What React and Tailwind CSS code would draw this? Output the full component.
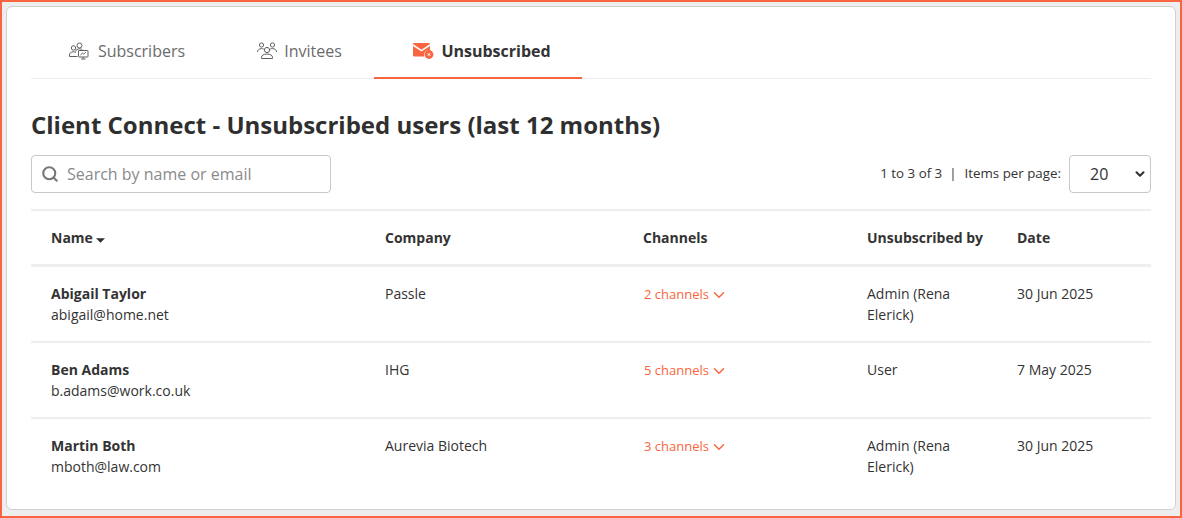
import React from 'react';
import { ChevronDown, Search } from 'lucide-react';

const rows = [
  { name: 'Abigail Taylor', email: 'abigail@home.net', company: 'Passle', channels: '2 channels', by: 'Admin (Rena Elerick)', date: '30 Jun 2025' },
  { name: 'Ben Adams', email: 'b.adams@work.co.uk', company: 'IHG', channels: '5 channels', by: 'User', date: '7 May 2025' },
  { name: 'Martin Both', email: 'mboth@law.com', company: 'Aurevia Biotech', channels: '3 channels', by: 'Admin (Rena Elerick)', date: '30 Jun 2025' },
];

const cols = 'grid grid-cols-[334px_258px_224px_150px_1fr] pl-5';

function SubscribersIcon() {
  return (
    <svg width="20" height="18" viewBox="0 0 20 18" fill="none" stroke="#5f5f5f" strokeWidth="1">
      <circle cx="4.5" cy="6" r="2.2" />
      <path d="M0.5 14.5v-1.5c0-2 1.6-3.2 4-3.2 1 0 1.8.2 2.4.6" />
      <path d="M0.5 14.5h8" />
      <circle cx="10.5" cy="3.5" r="2.5" />
      <path d="M6.5 9.5c.5-1.7 2-2.7 4-2.7 1.4 0 2.5.5 3.2 1.5" />
      <rect x="9.5" y="8.5" width="9.5" height="6.5" rx="0.6" />
      <path d="M11.5 13l2-1.8 1.2 1 2-2M14.2 15v1.6M12 17h4.5" />
    </svg>
  );
}

function InviteesIcon() {
  return (
    <svg width="20" height="18" viewBox="0 0 20 18" fill="none" stroke="#5f5f5f" strokeWidth="1">
      <circle cx="4.5" cy="3" r="2.1" />
      <circle cx="15.5" cy="3" r="2.1" />
      <circle cx="10" cy="8" r="2.6" />
      <path d="M0.5 10c0-2 1.6-3.4 4-3.4 1 0 1.7.2 2.3.6M19.5 10c0-2-1.6-3.4-4-3.4-1 0-1.7.2-2.3.6" />
      <path d="M4.5 16.5v-1.2c0-2 2.3-3.3 5.5-3.3s5.5 1.3 5.5 3.3v1.2z" />
    </svg>
  );
}

function UnsubscribedIcon() {
  return (
    <svg width="21" height="16" viewBox="0 0 21 16">
      <path d="M1.2 0h14.6c.7 0 1.2.5 1.2 1.1L8.5 6.7 0 1.1C0 .5.5 0 1.2 0z" fill="#f96540" />
      <path d="M0 3l8.5 5.5L17 3v4.2a5 5 0 0 0-5.8 6.3H1.2C.5 13.5 0 13 0 12.3z" fill="#f96540" />
      <circle cx="16" cy="11.5" r="4.4" fill="#f96540" />
      <path d="M14.7 10.2l2.6 2.6M17.3 10.2l-2.6 2.6" stroke="#fff" strokeWidth="1" />
    </svg>
  );
}

export default function App() {
  return (
    <div className="w-[1182px] h-[518px] overflow-hidden border-2 border-[#f96540] bg-[#eeeeee] p-1 font-['Open_Sans',sans-serif] text-[#333333]">
      <div className="h-[504px] rounded-md border border-[#d0d0d0] bg-white px-6">
        {/* Tabs */}
        <div className="flex h-[72px] border-b border-[#eeeeee] text-base">
          <div className="flex w-[191px] items-center justify-center gap-[9px] pt-[31px] pb-[15px] pl-px text-[#6b6b6b]">
            <SubscribersIcon />
            <span>Subscribers</span>
          </div>
          <div className="flex w-[152px] items-center justify-center gap-[7px] pt-[31px] pb-[15px] pl-[3px] text-[#6b6b6b]">
            <InviteesIcon />
            <span>Invitees</span>
          </div>
          <div className="-mb-px flex w-[208px] items-center justify-center gap-[7px] border-b-2 border-[#f96540] pt-[31px] pb-[14px] pl-[8px] font-bold">
            <UnsubscribedIcon />
            <span>Unsubscribed</span>
          </div>
        </div>

        <h1 className="mt-[28px] text-2xl leading-[36px] font-bold text-[#2f2f2f]">Client Connect - Unsubscribed users (last 12 months)</h1>

        {/* Search and paging */}
        <div className="mt-[12px] flex h-[38px] items-center justify-between">
          <div className="flex h-[38px] w-[300px] items-center gap-2 rounded border border-[#c8c8c8] pl-[9px] text-base text-[#8a8a8a]">
            <Search size={18} strokeWidth={2.8} className="text-[#777777]" />
            <span>Search by name or email</span>
          </div>
          <div className="flex items-center text-[13.33px] text-[#333333]">
            <span>1 to 3 of 3</span>
            <span className="mr-2 ml-[7px]">|</span>
            <span>Items per page:</span>
            <div className="ml-2 flex h-[38px] w-[82px] items-center justify-between rounded border border-[#c8c8c8] pr-[3px] pl-5 text-base">
              <span>20</span>
              <ChevronDown size={14} strokeWidth={3.5} />
            </div>
          </div>
        </div>

        {/* Table */}
        <div className="mt-4 border-t-2 border-[#eeeeee] text-sm">
          <div className={`${cols} h-[56px] items-center border-b-[3px] border-[#eeeeee] font-bold`}>
            <div className="flex items-center gap-[3px]">
              <span>Name</span>
              <svg width="9" height="5" viewBox="0 0 10 5" className="mt-1.5"><path d="M0 0h10L5 5z" fill="#2f2f2f" /></svg>
            </div>
            <div>Company</div>
            <div>Channels</div>
            <div>Unsubscribed by</div>
            <div>Date</div>
          </div>
          {rows.map((r, i) => (
            <div key={r.name} className={`${cols} h-[76px] pt-[16px] leading-[21px] ${i < 2 ? 'border-b-2 border-[#eeeeee]' : ''}`}>
              <div>
                <div className="font-bold">{r.name}</div>
                <div>{r.email}</div>
              </div>
              <div>{r.company}</div>
              <div className="flex h-[23px] items-center gap-[1px] pl-px text-[13px] text-[#f96540]">
                <span>{r.channels}</span>
                <ChevronDown size={18} strokeWidth={2} />
              </div>
              <div className="w-[100px]">{r.by}</div>
              <div>{r.date}</div>
            </div>
          ))}
        </div>
      </div>
    </div>
  );
}
